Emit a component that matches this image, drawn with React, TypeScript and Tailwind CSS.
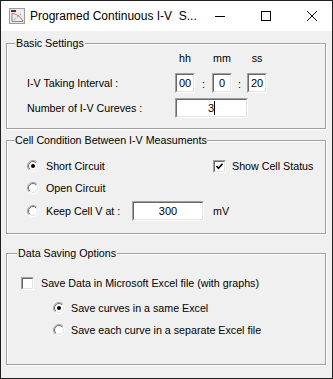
import { useId } from "react";

const sans = "font-['Liberation_Sans',Arial,sans-serif]";

function AppIcon() {
  return (
    <svg width="16" height="16" viewBox="0 0 16 16">
      <rect x="0.5" y="0.5" width="15" height="15" fill="#ececec" stroke="#9c9c9c" />
      <rect x="2" y="2" width="5" height="2" fill="#3a3a3a" />
      <path d="M3 5 V13.5 H14" fill="none" stroke="#8a8a8a" />
      <path d="M3.5 5.5 C7 6, 11 8, 14 13" fill="none" stroke="#e0607a" />
      <path d="M3.5 13 C6 11, 9 8, 12 6" fill="none" stroke="#4caf50" strokeDasharray="1 1" />
    </svg>
  );
}

function Radio({ checked }: { checked?: boolean }) {
  const id = useId();
  return (
    <svg width="12" height="12" viewBox="0 0 12 12" className="shrink-0">
      <defs>
        <linearGradient id={id + "o"} x1="0" y1="0" x2="1" y2="1">
          <stop offset="0.5" stopColor="#a0a0a0" />
          <stop offset="0.5" stopColor="#ffffff" />
        </linearGradient>
        <linearGradient id={id + "i"} x1="0" y1="0" x2="1" y2="1">
          <stop offset="0.5" stopColor="#696969" />
          <stop offset="0.5" stopColor="#e3e3e3" />
        </linearGradient>
      </defs>
      <circle cx="6" cy="6" r="5.5" fill="none" stroke={`url(#${id}o)`} />
      <circle cx="6" cy="6" r="4.5" fill="#ffffff" stroke={`url(#${id}i)`} />
      {checked && <circle cx="6" cy="6" r="2" fill="#000000" />}
    </svg>
  );
}

function CheckBox({ checked }: { checked?: boolean }) {
  return (
    <div className="w-[13px] h-[13px] shrink-0 border border-t-[#a0a0a0] border-l-[#a0a0a0] border-b-white border-r-white">
      <div className="w-full h-full bg-white border border-t-[#696969] border-l-[#696969] border-b-[#e3e3e3] border-r-[#e3e3e3] flex items-center justify-center">
        {checked && (
          <svg width="9" height="9" viewBox="0 0 9 9">
            <path d="M1.5 4 L3.5 6.2 L7.5 1.8" fill="none" stroke="#000" strokeWidth="1.6" />
          </svg>
        )}
      </div>
    </div>
  );
}

function TextBox({ value, width, caret }: { value: string; width: string; caret?: boolean }) {
  return (
    <div className={`${width} h-[20px] shrink-0 border border-t-[#a0a0a0] border-l-[#a0a0a0] border-b-white border-r-white`}>
      <div className="w-full h-full bg-white border border-t-[#696969] border-l-[#696969] border-b-[#e3e3e3] border-r-[#e3e3e3] flex items-center justify-center text-[11px] leading-[13px]">
        <span>{value}</span>
        {caret && <span className="w-px h-[14px] bg-black" />}
      </div>
    </div>
  );
}

export default function App() {
  return (
    <div className={`w-[333px] h-[379px] border border-[#1f1f1f] bg-[#f0f0f0] flex flex-col text-black ${sans}`}>
      <div className="h-[30px] shrink-0 bg-white flex items-center">
        <div className="ml-[8px] w-4 h-4">
          <AppIcon />
        </div>
        <span className="ml-[5px] text-[12px] leading-[16px] whitespace-pre">Programed Continuous I-V  S...</span>
        <div className="ml-auto flex h-full">
          <div className="w-[46px] h-full flex items-center justify-center">
            <svg width="10" height="10" viewBox="0 0 10 10">
              <path d="M0 5.5 H10" stroke="#000" />
            </svg>
          </div>
          <div className="w-[46px] h-full flex items-center justify-center">
            <svg width="10" height="10" viewBox="0 0 10 10">
              <rect x="0.5" y="0.5" width="9" height="9" fill="none" stroke="#000" />
            </svg>
          </div>
          <div className="w-[46px] h-full flex items-center justify-center">
            <svg width="10" height="10" viewBox="0 0 10 10">
              <path d="M0 0 L10 10 M10 0 L0 10" stroke="#000" />
            </svg>
          </div>
        </div>
      </div>

      <div className="flex flex-col pl-[5px] text-[10.7px] leading-[13px]">
        {/* Basic Settings */}
        <fieldset className="mt-[6px] w-[320px] border border-[#a0a0a0] shadow-[inset_1px_1px_0_#fff,1px_1px_0_#fff] px-[8px] pt-[2px] pb-[10px]">
          <legend className="px-[1px] bg-[#f0f0f0]">Basic Settings</legend>
          <div className="ml-[12px] flex flex-col">
            <div className="flex h-[13px]">
              <span className="w-[148px]" />
              <span className="w-[20px] text-center">hh</span>
              <span className="w-[17px]" />
              <span className="w-[20px] text-center">mm</span>
              <span className="w-[15px]" />
              <span className="w-[20px] text-center">ss</span>
            </div>
            <div className="flex items-center mt-[8px]">
              <span className="w-[148px]">I-V Taking Interval :</span>
              <TextBox value="00" width="w-[20px]" />
              <span className="w-[17px] text-center pt-[2px]">:</span>
              <TextBox value="0" width="w-[20px]" />
              <span className="w-[15px] text-center pt-[2px]">:</span>
              <TextBox value="20" width="w-[20px]" />
            </div>
            <div className="flex items-center mt-[5px]">
              <span className="w-[148px]">Number of I-V Cureves :</span>
              <TextBox value="3" width="w-[73px]" caret />
            </div>
          </div>
        </fieldset>

        {/* Cell Condition */}
        <fieldset className="mt-[5px] w-[320px] border border-[#a0a0a0] shadow-[inset_1px_1px_0_#fff,1px_1px_0_#fff] px-[8px] pt-[9px] pb-[12px]">
          <legend className="px-[0px] bg-[#f0f0f0]">Cell Condition Between I-V Measuments</legend>
          <div className="ml-[12px] flex flex-col">
            <div className="flex items-center h-[20px]">
              <div className="w-[186px] flex items-center">
                <Radio checked />
                <span className="ml-[7px]">Short Circuit</span>
              </div>
              <CheckBox checked />
              <span className="ml-[6px]">Show Cell Status</span>
            </div>
            <div className="flex items-center h-[20px] mt-[2px]">
              <Radio />
              <span className="ml-[7px]">Open Circuit</span>
            </div>
            <div className="flex items-center h-[20px] mt-[3px]">
              <Radio />
              <span className="ml-[7px] w-[86px]">Keep Cell V at :</span>
              <TextBox value="300" width="w-[72px]" />
              <span className="ml-[9px]">mV</span>
            </div>
          </div>
        </fieldset>

        {/* Data Saving Options */}
        <fieldset className="mt-[13px] w-[320px] border border-[#a0a0a0] shadow-[inset_1px_1px_0_#fff,1px_1px_0_#fff] px-[8px] pt-[13px] pb-[24px]">
          <legend className="ml-[2px] px-[1px] bg-[#f0f0f0]">Data Saving Options</legend>
          <div className="flex flex-col">
            <div className="flex items-center h-[20px] ml-[6px]">
              <CheckBox />
              <span className="ml-[7px]">Save Data in Microsoft Excel file (with graphs)</span>
            </div>
            <div className="flex items-center h-[20px] mt-[5px] ml-[38px]">
              <Radio checked />
              <span className="ml-[6px]">Save curves in a same Excel</span>
            </div>
            <div className="flex items-center h-[20px] mt-[2px] ml-[38px]">
              <Radio />
              <span className="ml-[6px]">Save each curve in a separate Excel file</span>
            </div>
          </div>
        </fieldset>
      </div>
    </div>
  );
}
